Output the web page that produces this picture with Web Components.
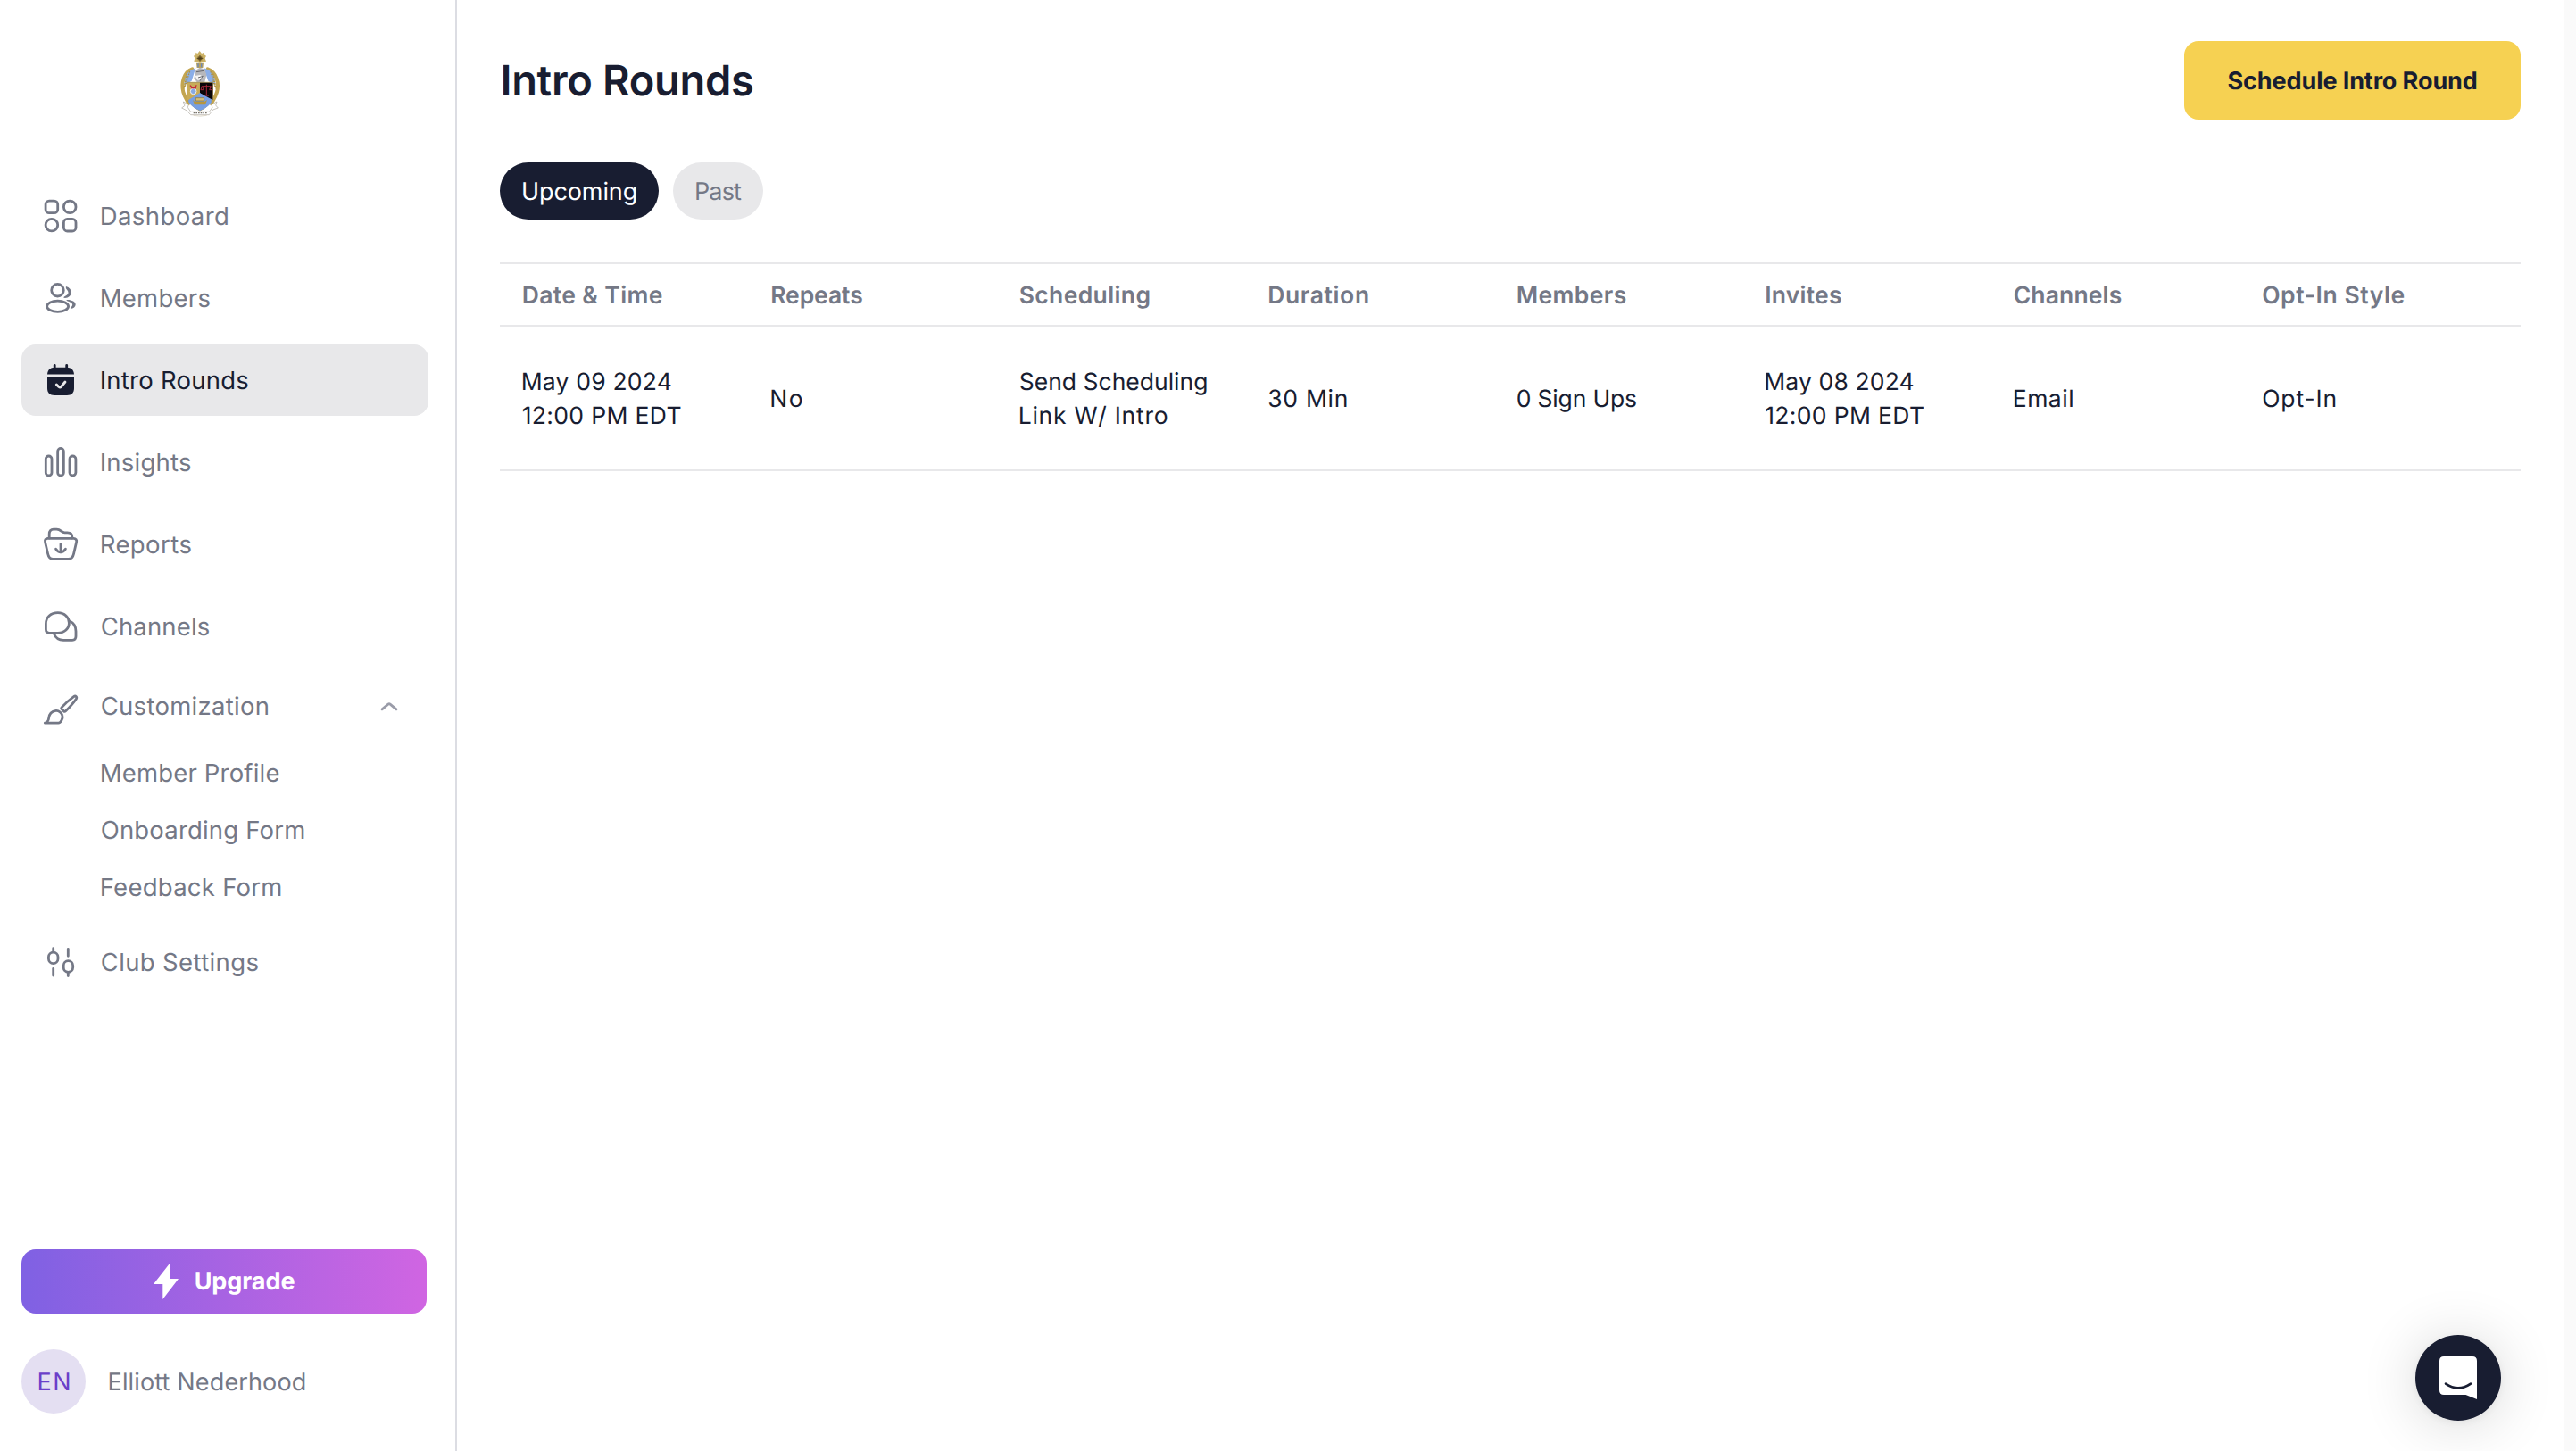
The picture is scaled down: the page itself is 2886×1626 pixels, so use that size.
<!DOCTYPE html>
<html lang="en">
<head>
<meta charset="utf-8">
<title>Intro Rounds</title>
<style>
html, body { margin: 0; height: 100%; background: #fff; overflow: hidden; }
body {
  --ink: #181d31; --muted: #747886; --line: #e8e8ea; --soft: #e8e8ea;
  font-family: Inter, "Liberation Sans", sans-serif; color: var(--ink);
  text-rendering: geometricPrecision;
}
</style>
</head>
<body>
<app-shell>
  <side-bar slot="side">
    <nav-item icon="dashboard"><fit-text w="141.3">Dashboard</fit-text></nav-item>
    <nav-item icon="members"><fit-text w="121.7">Members</fit-text></nav-item>
    <nav-item icon="rounds" active><fit-text w="164.7">Intro Rounds</fit-text></nav-item>
    <nav-item icon="insights"><fit-text w="100.3">Insights</fit-text></nav-item>
    <nav-item icon="reports"><fit-text w="100.7">Reports</fit-text></nav-item>
    <nav-item icon="channels"><fit-text w="121">Channels</fit-text></nav-item>
    <nav-item icon="brush" group><fit-text w="187">Customization</fit-text></nav-item>
    <nav-sub>
      <fit-text w="198.7">Member Profile</fit-text>
      <fit-text w="226.5">Onboarding Form</fit-text>
      <fit-text w="200.7">Feedback Form</fit-text>
    </nav-sub>
    <nav-item icon="settings"><fit-text w="175.7">Club Settings</fit-text></nav-item>
    <upgrade-button slot="foot"><fit-text w="111.7">Upgrade</fit-text></upgrade-button>
    <user-chip slot="foot"><fit-text slot="initials" w="33.7">EN</fit-text><fit-text w="219.3">Elliott Nederhood</fit-text></user-chip>
  </side-bar>
  <page-header>
    <fit-text slot="title" w="279.4">Intro Rounds</fit-text>
    <fit-text slot="action" w="278.3">Schedule Intro Round</fit-text>
  </page-header>
  <tab-bar>
    <tab-pill active style="width:178px"><fit-text w="126.7">Upcoming</fit-text></tab-pill>
    <tab-pill style="width:101px"><fit-text w="51">Past</fit-text></tab-pill>
  </tab-bar>
  <data-table>
    <table-row head>
      <table-cell><fit-text w="156">Date &amp; Time</fit-text></table-cell>
      <table-cell><fit-text w="102">Repeats</fit-text></table-cell>
      <table-cell><fit-text w="144.7">Scheduling</fit-text></table-cell>
      <table-cell><fit-text w="111.7">Duration</fit-text></table-cell>
      <table-cell><fit-text w="122">Members</fit-text></table-cell>
      <table-cell><fit-text w="84.7">Invites</fit-text></table-cell>
      <table-cell><fit-text w="120">Channels</fit-text></table-cell>
      <table-cell><fit-text w="158.4">Opt-In Style</fit-text></table-cell>
    </table-row>
    <table-row>
      <table-cell><fit-text w="166">May 09 2024</fit-text><fit-text w="176.8">12:00 PM EDT</fit-text></table-cell>
      <table-cell><fit-text w="34.6">No</fit-text></table-cell>
      <table-cell><fit-text w="209.5">Send Scheduling</fit-text><fit-text w="165">Link W/ Intro</fit-text></table-cell>
      <table-cell><fit-text w="87.5">30 Min</fit-text></table-cell>
      <table-cell><fit-text w="133.4">0 Sign Ups</fit-text></table-cell>
      <table-cell><fit-text w="165.4">May 08 2024</fit-text><fit-text w="176.8">12:00 PM EDT</fit-text></table-cell>
      <table-cell><fit-text w="65.5">Email</fit-text></table-cell>
      <table-cell><fit-text w="81.4">Opt-In</fit-text></table-cell>
    </table-row>
  </data-table>
</app-shell>
<chat-launcher></chat-launcher>

<script>
const define = (name, html, setup) => customElements.define(name, class extends HTMLElement {
  constructor() {
    super();
    this.attachShadow({ mode: 'open' }).innerHTML = html;
  }
  connectedCallback() { if (setup) setup(this, this.shadowRoot); }
});

const ICONS = {
  dashboard: `<rect x="7.1" y="7.1" width="13.6" height="13.6" rx="4"/><circle cx="34.2" cy="13.9" r="6.8"/><circle cx="13.9" cy="34.1" r="6.8"/><rect x="27.4" y="27.4" width="13.6" height="13.6" rx="4"/>`,
  members: `<circle cx="20.5" cy="15.2" r="6.8"/><ellipse cx="20.6" cy="33.2" rx="12" ry="6.1"/><g fill="currentColor" stroke="none"><path d="M30 10.9C33.8 12 35.9 14.6 35.9 17.5C35.9 21.5 32.2 24.5 27.4 23.8C27.3 22.8 28.4 22.2 29.6 21.5C32 20.2 33.2 18.4 32.2 16.4C31.5 14.9 29.6 13.8 29.8 12Z"/><path d="M30.4 26.1C36 25.7 40.8 28.2 40.7 31.3C40.6 34 38.4 35.8 35 36.1C34.6 35.2 35.4 34.4 36.3 33.4C38 31.5 37.2 29.9 34.8 28.7C33 27.8 30.5 27.6 30.4 26.1Z"/></g>`,
  rounds: `<g fill="currentColor" stroke="none"><path d="M9 17.4C9.4 12.6 12.4 9.8 17 9.8H31C35.6 9.8 38.6 12.6 39 17.4Z"/><path d="M9 20.3H39V33C39 38.2 36.2 41 31 41H17C11.8 41 9 38.2 9 33Z"/></g><path d="M17.2 7.3V11M30.7 7.3V11"/><path d="M19.3 28.9L21.9 31.5C22.7 32.2 23.7 32.2 24.4 31.5L29 26" stroke="#e8e8ea"/>`,
  insights: `<rect x="7.3" y="17" width="6.7" height="22" rx="3.35"/><rect x="20.65" y="8.4" width="6.7" height="30.6" rx="3.35"/><rect x="34" y="17" width="6.9" height="22" rx="3.4"/>`,
  reports: `<path d="M9.5 17.4H38.5C41 17.4 42.2 19.3 41.6 21.5L38.6 34.5C37.7 38.9 35.5 40.5 32.5 40.5H15.5C12.5 40.5 10.5 38.9 9.6 34.5L6.6 21.5C6 19.3 7 17.4 9.5 17.4Z"/><path d="M11.2 17V12.5C11.2 9 13 7.1 16 7.1H19.5C24.5 7.1 24.5 10.8 28.5 10.8H31.5C35 10.8 36.8 12.6 36.8 15.5V17M24 23.6V33M18.6 29.2C21.8 34.2 26.2 34.2 29.4 29.2"/>`,
  channels: `<path d="M7.4 21C7.4 13.5 13 8.7 20.8 8.7C28.4 8.7 33.4 13.8 33.4 20C33.4 26.5 28.4 31.3 20.8 31.3H11.5C8.8 31.3 7.4 29.8 7.4 27.3Z"/><path d="M34.5 18.3C38.8 20.3 41 24.5 41 29.5V35C41 37.9 39.5 39.3 37 39.3H27C22.3 39.3 18.5 37.1 16.7 32.8"/>`,
  brush: `<path d="M38.6 9.7C40.7 8.1 42.6 10 41.3 12.2C38.2 17 33.4 22 29.6 25.8C28.8 26.6 28.2 26.6 27.5 25.9L25.2 23.8C24.5 23.1 24.5 22.5 25.2 21.7C29 17.4 33.8 13.2 38.6 9.7Z"/><path d="M6.3 39.2H21.5C24 39.2 26.8 34 25.9 30.8C25.3 28.4 22 25 18.8 25.3C13.5 25.8 11 29.5 10.6 34C10.3 37 9 38.4 6.3 39.2Z"/>`,
  settings: `<rect x="10.4" y="13.1" width="10.6" height="12.5" rx="5.3"/><path d="M15.7 8.7V12.5M15.7 31.3V39M32.3 9.3V17.3M32.3 36V39.6"/><rect x="27.2" y="22.7" width="10.5" height="12.6" rx="5.25"/>`
};

define('app-shell', `<style>
  :host{display:grid;grid-template-columns:512px 1fr 14px;height:100vh}
  main{padding:46px 48px 0;min-width:0}
  .gutter{background:#fafafa;position:relative;z-index:2}
</style><slot name="side"></slot><main><slot></slot></main><div class="gutter"></div>`);

define('club-crest', `<style>:host{display:block}svg{display:block}</style>
<svg width="46.67" height="78.33" viewBox="60 45 140 235">
  <g fill="none" stroke="#c3a550" stroke-linecap="round">
    <path d="M106 112C78 122 68 158 76 190C80 206 88 216 94 228" stroke-width="12"/>
    <path d="M158 112C186 122 198 158 189 190C185 206 177 216 170 228" stroke-width="12"/>
  </g>
  <path d="M106 114C88 122 80 142 80 166L104 152L118 108ZM158 114C176 122 184 142 184 166L160 152L144 108Z" fill="#8aaee8"/>
  <path d="M88 128L78 178M98 120L82 170M176 128L186 178M168 120L182 170" stroke="#b0923e" stroke-width="4" stroke-dasharray="5 3"/>
  <path d="M118 56L124 60L131 51L138 60L145 56L146 64L153 68L149 76L153 86L143 89L132 92L121 89L112 86L115 76L111 68L118 64Z" fill="#cbb164"/>
  <path d="M125 70H139V82H125Z" fill="#78612a"/><path d="M132 66V86M122 76H142" stroke="#4a3c1c" stroke-width="3"/>
  <path d="M120 92H144L142 108H122Z" fill="#b9a35d"/><path d="M126 94V106M137 94V106" stroke="#6d87bd" stroke-width="4"/>
  <path d="M118 116L132 107L148 113L154 132L148 156H122L112 143Z" fill="#b7b8bc"/>
  <path d="M115 135L133 132L143 138L138 146L125 150Z" fill="#f5f5f5"/><path d="M120 122L145 118M126 141L142 136L132 152" stroke="#65676c" stroke-width="3" fill="none"/>
  <path d="M89 157H175V205C175 226 151 243 132 252C113 243 89 226 89 205Z" fill="#779fe3" stroke="#ae9145" stroke-width="3"/>
  <path d="M90 158H132V193L90 218Z" fill="#c8ab58"/><path d="M132 158H175V216L132 193Z" fill="#090608"/>
  <path d="M99 167L105 174M121 166L115 174" stroke="#c32b3a" stroke-width="4"/><circle cx="110" cy="187" r="10" fill="#86a9e4" stroke="#eee" stroke-width="3"/><path d="M102 176H120" stroke="#c32b3a" stroke-width="4"/>
  <path d="M154 164V202M139 170H169M139 170L135 182H145ZM169 170L164 182H174ZM146 201H162" stroke="#a3273a" stroke-width="3" fill="none"/>
  <path d="M76 222L94 232L91 241L101 256H163L174 241L170 232L189 222L185 234L193 243L176 249L163 266H101L88 252L71 243L81 235Z" fill="#fff" stroke="#aaa69d" stroke-width="2"/>
  <path d="M93 222C104 240 120 247 132 252C145 247 163 238 171 222L166 214L132 193L98 214Z" fill="#779fe3"/>
  <path d="M108 216L114 221H148L156 216L150 232H114Z" fill="#b7963e"/><path d="M118 209H146V219H118Z" fill="#d3bd79" stroke="#8b7130" stroke-width="2"/>
  <path d="M110 260L155 260" stroke="#77736b" stroke-width="4" stroke-dasharray="5 3"/>
  <path d="M110 268Q132 273 155 268" fill="none" stroke="#d1c9b3" stroke-width="2"/>
</svg>`);

define('side-bar', `<style>
  :host{display:flex;flex-direction:column;box-sizing:border-box;border-right:2px solid #dcdde3;height:100vh;background:#fff;color:var(--muted);font-size:27.5px;font-weight:380}
  header{box-sizing:border-box;height:202px;padding:55px 0 0 200px}
  nav{display:flex;flex-direction:column;gap:12px;padding:0 30px 0 24px}
  footer{margin-top:auto;padding:0 32px 42px 24px;display:flex;flex-direction:column;gap:40px}
</style><header><club-crest></club-crest></header><nav><slot></slot></nav><footer><slot name="foot"></slot></footer>`);

define('nav-item', `<style>
  :host{display:flex;align-items:center;box-sizing:border-box;height:80px;padding:0 34px 0 20px;border-radius:16px;gap:21.7px}
  :host([active]){background:var(--soft);color:var(--ink)}
  :host([group]){height:74px;margin-bottom:-6px}
  :host([group]) .icon{margin-top:8px}
  svg{display:block;flex:none;fill:none;stroke:currentColor;stroke-width:2.8;stroke-linecap:round;stroke-linejoin:round}
  .chev{display:none;margin-left:auto;color:#9a9ca9}
  :host([group]) .chev{display:block}
</style><svg class="icon" width="48" height="48" viewBox="0 0 48 48"></svg><slot></slot>
<svg class="chev" width="20" height="12" viewBox="0 0 20 12"><path d="M2 9.8L8.9 4.1Q10 3.2 11.1 4.1L18 9.8"/></svg>`,
  (el, root) => { root.querySelector('.icon').innerHTML = ICONS[el.getAttribute('icon')]; });

define('nav-sub', `<style>:host{display:flex;flex-direction:column;padding-left:89.7px;line-height:64px}</style><slot></slot>`);

define('upgrade-button', `<style>
  :host{display:flex;align-items:center;box-sizing:border-box;height:72px;padding-left:148px;gap:18.7px;border-radius:16px;color:#fff;font-size:27px;font-weight:700;background:linear-gradient(90deg,#7f61e3,#d065e2)}
  svg{display:block} div{margin-top:-2px}
</style><svg width="28" height="40" viewBox="0 0 28 40"><path d="M18 0V17H28L10.3 40V23H0Z" fill="#fff"/></svg><div><slot></slot></div>`);

define('user-chip', `<style>
  :host{display:flex;align-items:center;gap:26.5px;font-size:27px;font-weight:410}
  .avatar{width:72px;height:72px;border-radius:50%;background:#e4dff2;color:#6b3fc9;display:flex;align-items:center;box-sizing:border-box;padding-left:19.5px}
</style><div class="avatar"><slot name="initials"></slot></div><slot></slot>`);

define('page-header', `<style>
  :host{display:flex;align-items:center;justify-content:space-between;height:88px}
  .title{font-size:47px;font-weight:640;padding-left:3.5px}
  .btn{box-sizing:border-box;width:377px;height:88px;border-radius:16px;background:#f6d152;display:flex;align-items:center;padding-left:49.5px;font-size:27px;font-weight:650}
</style><div class="title"><slot name="title"></slot></div><div class="btn"><slot name="action"></slot></div>`);

define('tab-bar', `<style>:host{display:flex;gap:16px;margin-top:48px}</style><slot></slot>`);
define('tab-pill', `<style>
  :host{display:flex;align-items:center;box-sizing:border-box;height:64px;padding-left:26px;border-radius:32px;background:var(--soft);color:var(--muted);font-size:27px;font-weight:440}
  :host([active]){background:var(--ink);color:#fff}
</style><slot></slot>`);

define('data-table', `<style>:host{display:block;margin-top:48px;border-top:2px solid var(--line)}</style><slot></slot>`);
define('table-row', `<style>
  :host{display:grid;grid-template-columns:repeat(8,278.5px);align-items:center;height:160px;padding-left:25.7px;border-bottom:2px solid var(--line);font-size:26.5px;font-weight:440;line-height:38px}
  :host([head]){height:68px;color:var(--muted);font-size:26.5px;font-weight:620}
</style><slot></slot>`);
define('table-cell', `<style>:host{display:block;min-width:0;padding-top:1px}</style><slot></slot>`);

define('chat-launcher', `<style>
  :host{position:fixed;right:84px;bottom:34px;width:96px;height:96px;border-radius:50%;background:var(--ink);box-shadow:0 2px 12px rgba(0,0,0,.06),0 4px 64px rgba(0,0,0,.16);z-index:1}
  svg{display:block}
</style><svg width="96" height="96" viewBox="0 0 96 96"><path d="M32 24H64Q69 24 69 29V72L56.5 67H32Q27 67 27 62V29Q27 24 32 24Z" fill="#fff"/><path d="M34 54.6Q48 64.2 62 54.6" fill="none" stroke="#181d31" stroke-width="2.6" stroke-linecap="round"/></svg>`);

// Sets its text on a single line whose visible glyphs span exactly `w` pixels.
// Registered last, so the surrounding elements already supply the inherited font.
customElements.define('fit-text', class extends HTMLElement {
  constructor() {
    super();
    this.attachShadow({ mode: 'open' }).innerHTML =
      `<style>:host{display:block;width:max-content;white-space:nowrap;font-feature-settings:"calt" 0;font-optical-sizing:none}</style><slot></slot>`;
  }
  connectedCallback() {
    const text = this.textContent;
    const cs = getComputedStyle(this);
    const ctx = document.createElement('canvas').getContext('2d');
    ctx.font = `${cs.fontWeight} ${cs.fontSize} ${cs.fontFamily}`;
    const m = ctx.measureText(text);
    // Side bearings come from the canvas, the advance width from the laid-out box.
    const bearings = m.width - m.actualBoundingBoxLeft - m.actualBoundingBoxRight;
    const ink = this.getBoundingClientRect().width - bearings;
    this.style.letterSpacing = ((this.getAttribute('w') - ink) / (text.length - 1)).toFixed(3) + 'px';
    this.style.marginLeft = m.actualBoundingBoxLeft.toFixed(2) + 'px';
  }
});
</script>
</body>
</html>
